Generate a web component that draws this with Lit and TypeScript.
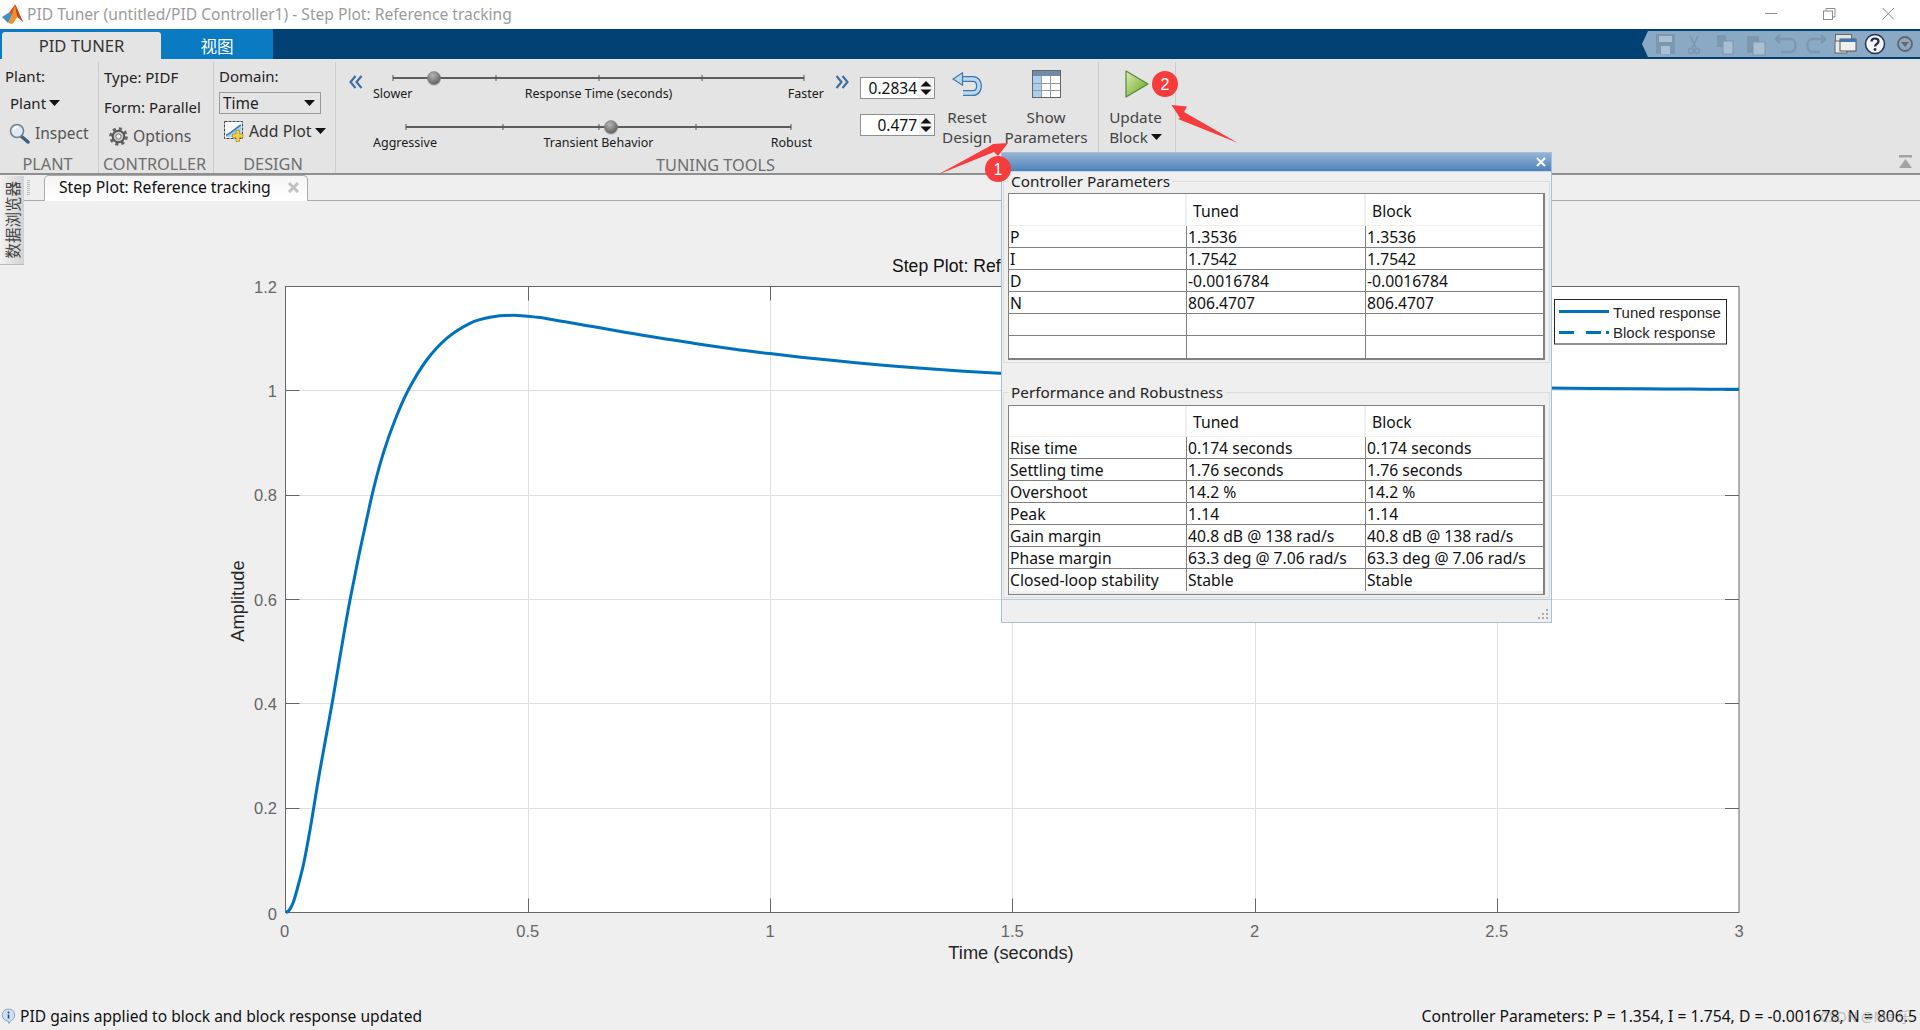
import { LitElement, html, css, svg } from "lit";
import { customElement } from "lit/decorators.js";

const X0 = 285.5, X1 = 1739, Y0 = 912.5, Y1 = 286.5;
const xOf = (t: number) => X0 + ((X1 - X0) * t) / 3;
const yOf = (v: number) => Y0 + ((Y1 - Y0) * v) / 1.2;

const RISE: [number, number][] = [
  [285.7, 912.5], [289, 910.5], [293, 903], [298.3, 885], [304, 862], [310, 830], [320, 770], [332, 704], [350, 600],
  [371.7, 496.7], [383.3, 453.3], [395, 420], [408.3, 390], [426.7, 360], [446.7, 338.3], [470, 323.3], [490, 317.3], [513.3, 315.3],
];
const TAIL: [number, number][] = [];
for (let t = 0.52; t <= 3.001; t += t < 1 ? 0.04 : 0.1) {
  const v = 1 + 0.36 * Math.exp(-t / 0.62) - 0.65 * Math.exp(-t / 0.137);
  TAIL.push([+xOf(t).toFixed(1), +yOf(v).toFixed(1)]);
}
const CURVE = [...RISE, ...TAIL];

function smooth(p: [number, number][]): string {
  let d = `M${p[0][0]} ${p[0][1]}`;
  for (let i = 0; i < p.length - 1; i++) {
    const a = p[Math.max(i - 1, 0)], b = p[i], c = p[i + 1], e = p[Math.min(i + 2, p.length - 1)];
    const c1x = b[0] + (c[0] - a[0]) / 6, c1y = b[1] + (c[1] - a[1]) / 6;
    const c2x = c[0] - (e[0] - b[0]) / 6, c2y = c[1] - (e[1] - b[1]) / 6;
    d += `C${c1x.toFixed(1)} ${c1y.toFixed(1)} ${c2x.toFixed(1)} ${c2y.toFixed(1)} ${c[0]} ${c[1]}`;
  }
  return d;
}

const XT = ["0", "0.5", "1", "1.5", "2", "2.5", "3"];
const YT = ["0", "0.2", "0.4", "0.6", "0.8", "1", "1.2"];

const PARAMS = [
  ["P", "1.3536", "1.3536"],
  ["I", "1.7542", "1.7542"],
  ["D", "-0.0016784", "-0.0016784"],
  ["N", "806.4707", "806.4707"],
  ["", "", ""],
  ["", "", ""],
];
const PERF = [
  ["Rise time", "0.174 seconds", "0.174 seconds"],
  ["Settling time", "1.76 seconds", "1.76 seconds"],
  ["Overshoot", "14.2 %", "14.2 %"],
  ["Peak", "1.14", "1.14"],
  ["Gain margin", "40.8 dB @ 138 rad/s", "40.8 dB @ 138 rad/s"],
  ["Phase margin", "63.3 deg @ 7.06 rad/s", "63.3 deg @ 7.06 rad/s"],
  ["Closed-loop stability", "Stable", "Stable"],
];

const caret = html`<svg class="caret" width="11" height="6" viewBox="0 0 11 6"><path d="M0 0H11L5.5 6Z" fill="#111"/></svg>`;

@customElement("app-root")
export class AppRoot extends LitElement {
  static styles = css`
    :host { display: block; width: 1920px; height: 1030px; position: relative; overflow: hidden;
      background: #efefef; font-family: "Noto Sans", "Noto Sans CJK SC", sans-serif; font-size: 15px; color: #222; }
    .app { display: flex; flex-direction: column; height: 1030px; }
    .title { height: 29px; background: #fff; display: flex; align-items: center; color: #9b9b9b; font-size: 15.6px; flex: none; padding-bottom: 1px; box-sizing: border-box; }
    .logo { margin: 0 3px 0 2px; }
    .spacer { flex: 1; }
    .wc { margin-right: 20px; }
    .strip { height: 30px; background: #004073; display: flex; flex: none; }
    .tabs { width: 273px; background: #0a7ac2; display: flex; padding: 3px 0 0 2px; box-sizing: border-box; }
    .tab1 { width: 159px; background: #e4e4e4; border-radius: 3px 3px 0 0; display: flex; align-items: center; justify-content: center; font-size: 16.6px; color: #333; padding-bottom: 1px; box-sizing: border-box; }
    .tab2 { flex: 1; display: flex; align-items: center; justify-content: center; color: #fff; font-size: 16.6px; }
    .qat { margin-top: 2px; }
    .ribbon { height: 116px; box-sizing: border-box; background: #e4e4e4; border-bottom: 2px solid #8f8f8f; display: flex; padding-top: 3px; flex: none; }
    .sec { height: 111px; box-sizing: border-box; border-right: 1px solid #cdcdcd; display: flex; flex-direction: column; flex: none; }
    .body { height: 92px; box-sizing: border-box; padding-left: 5px; }
    .cap { height: 20px; line-height: 22px; text-align: center; color: #6e6e6e; font-size: 16.3px; white-space: nowrap; padding-right: 3px; }
    .row { display: flex; align-items: center; white-space: nowrap; }
    .r30 { height: 28px; margin-bottom: 2px; } .r32 { height: 30px; margin-bottom: 2px; } .r24 { height: 22px; margin-bottom: 2px; padding-left: 5px; } .r26 { height: 26px; }
    .r28 { height: 26px; margin-top: 6px; color: #555; font-size: 15.5px; }
    .r28b { height: 28px; margin-top: 2px; padding-left: 5px; color: #555; font-size: 15.7px; }
    .r28c { height: 28px; margin-top: 3px; padding-left: 5px; color: #333; font-size: 15.8px; }
    .caret { margin-left: 3px; }
    .ic { margin-right: 5px; flex: none; }
    .s-plant { width: 99px; } .s-ctrl { width: 115px; } .s-design { width: 122px; } .s-tune { width: 763px; } .s-update { width: 77px; }
    .select { width: 102px; height: 22px; box-sizing: border-box; border: 1px solid #999; display: flex; align-items: center; justify-content: space-between; padding: 0 5px 0 3px; font-size: 15.5px; }
    .tunebody { display: flex; padding-left: 13px; }
    .chev { width: 14px; height: 16px; margin-top: 12px; flex: none; }
    .sliders { width: 451px; margin-left: 10px; padding-top: 6px; flex: none; }
    .sl { height: 33px; margin-bottom: 16px; }
    .sl svg { display: block; }
    .slabels { display: grid; grid-template-columns: 1fr auto 1fr; margin-top: -2px; height: 16px; line-height: 16px; font-size: 12.5px; color: #1a1a1a; white-space: nowrap; }
    .slabels .a { justify-self: start; }
    .slabels .c { justify-self: end; }
    .pad12 { padding-right: 12px; }
    .chevr { margin-left: 11px; }
    .spins { margin-left: 11px; padding-top: 15px; width: 75px; flex: none; }
    .spin { height: 22px; box-sizing: border-box; border: 1px solid #8e8e8e; background: #fff; display: flex; align-items: center; justify-content: flex-end; margin-bottom: 15px; font-size: 15.5px; padding-right: 1px; color: #111; }
    .spin svg { margin-left: 2px; }
    .big { display: flex; flex-direction: column; align-items: center; color: #444; line-height: 20px; flex: none; white-space: nowrap; font-size: 15.3px; }
    .bigicon { height: 44px; margin-bottom: 1px; display: flex; align-items: center; }
    .w64 { width: 64px; } .w94 { width: 94px; }
    .upd { padding: 0 3px 0 0; display: flex; justify-content: center; }
    .playicon { margin-left: 4px; }
    .rest { flex: 1; display: flex; justify-content: flex-end; align-items: flex-end; padding: 0 8px 5px 0; }
    .doc { height: 26px; flex: none; box-sizing: border-box; border-bottom: 1px solid #aaa; padding-left: 44px; display: flex; }
    .dtab { width: 264px; height: 26px; box-sizing: border-box; background: linear-gradient(#f4f4f4, #fff 85%); border: 1px solid #aaa; border-bottom: none; border-radius: 5px 5px 0 0; display: flex; align-items: center; justify-content: space-between; padding: 0 7px 3px 14px; color: #111; font-size: 15.7px; white-space: nowrap; }
    .plot { flex: 1; display: block; }
    .plot text { font-family: "Liberation Sans", Arial, sans-serif; }
    .tick { font-size: 16.5px; fill: #666; }
    .lab { font-size: 18.3px; fill: #262626; }
    .ttl { font-size: 17.6px; fill: #111; }
    .leg { font-size: 15px; fill: #262626; }
    .status { height: 30px; flex: none; display: flex; justify-content: space-between; align-items: center; padding: 2px 3px 0 1px; color: #111; font-size: 15.7px; white-space: nowrap; box-sizing: border-box; }
    .stl { display: flex; align-items: center; gap: 4px; font-size: 15.6px; }
    .side { position: absolute; left: 0; top: 176px; width: 24px; height: 89px; background: linear-gradient(90deg, #f2f2f2, #d2d2d2); border-bottom: 1px solid #bbb; display: flex; align-items: center; justify-content: center; writing-mode: vertical-rl; text-orientation: sideways; color: #444; font-size: 15.5px; box-sizing: border-box; }
    .side span { transform: rotate(180deg); white-space: nowrap; }
    .grip { position: absolute; left: 27px; top: 180px; }
    .popup { position: absolute; left: 1001px; top: 152px; width: 551px; height: 471px; box-sizing: border-box; background: #efefef; border: 1px solid #a9bfd8; display: flex; flex-direction: column; color: #111; }
    .ptitle { height: 18px; flex: none; background: linear-gradient(#96b4d4, #4c82bb); display: flex; justify-content: flex-end; align-items: center; padding-right: 5px; border-bottom: 1px solid #c9d6e4; box-sizing: content-box; }
    .pbody { padding: 0 1px; flex: none; }
    fieldset { margin: 0; border: 1px solid #dcdcdc; padding: 3px 3px 2px 4px; min-width: 0; }
    fieldset + fieldset { margin-top: 20px; padding-top: 4px; padding-bottom: 2px; }
    legend { margin-left: 1px; padding: 0 2px 0 2px; line-height: 18px; font-size: 15.3px; color: #222; }
    .wrap { border: 1px solid #808080; border-right-width: 2px; border-bottom-width: 2px; width: 537px; box-sizing: border-box; background: #fff; }
    .wrap2 { border-bottom-width: 1px; background: #efefef; padding-bottom: 3px; }
    table { border-collapse: separate; border-spacing: 0; table-layout: fixed; width: 100%; background: #fff; }
    td, th { height: 22px; box-sizing: border-box; padding: 1px 0 0 1px; font-weight: normal; text-align: left; border-bottom: 1px solid #808080; border-right: 1px solid #808080; white-space: nowrap; font-size: 15.7px; line-height: 19px; }
    td:last-child, th:last-child { border-right: none; }
    tr:last-child td { border-bottom: none; }
    th { height: 32px; padding: 3px 0 0 6px; border-bottom: 1px solid #efefef; border-right: 2px solid #efefef; }
    .wrap2 th { height: 31px; }
    .c0 { width: 178px; } .c1 { width: 179px; }
    .pfoot { margin-top: auto; height: 20px; flex: none; border-top: 1px solid #b9cbde; display: flex; justify-content: flex-end; align-items: flex-end; padding: 0 2px 2px 0; }
    .over { position: absolute; left: 0; top: 0; pointer-events: none; }
    .badge { font-family: "Liberation Sans", sans-serif; font-size: 16px; fill: #fff; text-anchor: middle; }
    .wm { position: absolute; left: 1820px; top: 1006px; color: rgba(150,150,150,.6); font-size: 14px; font-family: "Noto Sans", "Noto Sans CJK SC", sans-serif; }
  `;

  private knob(cx: number, id: string) {
    return svg`<circle cx=${cx} cy="11" r="7" fill="#999" opacity=".45"/><circle cx=${cx} cy="10" r="6.5" fill="url(#${id})" stroke="#777" stroke-width=".5"/>`;
  }

  private slider(x1: number, ticks: number[], knobX: number, id: string) {
    const x2 = ticks[ticks.length - 1];
    return html`<svg width="451" height="20" viewBox="0 0 451 20">
      <defs><radialGradient id=${id} cx=".4" cy=".3" r=".8"><stop offset="0" stop-color="#b5b5b5"/><stop offset="1" stop-color="#555"/></radialGradient></defs>
      <rect x=${x1} y="9" width=${x2 - x1} height="2" fill="#5c5c5c"/>
      ${[x1, ...ticks].map((t) => svg`<rect x=${t - 0.5} y="7" width="1" height="6" fill="#555"/>`)}
      ${this.knob(knobX, id)}
    </svg>`;
  }

  private table(rows: string[][], second = false) {
    return html`<div class="wrap ${second ? "wrap2" : ""}"><table>
      <colgroup><col class="c0"/><col class="c1"/><col/></colgroup>
      <tr><th></th><th>Tuned</th><th>Block</th></tr>
      ${rows.map((r) => html`<tr><td>${r[0]}</td><td>${r[1]}</td><td>${r[2]}</td></tr>`)}
    </table></div>`;
  }

  render() {
    return html`<div class="app">
      <div class="title">
        <svg class="logo" width="22" height="22" viewBox="0 0 22 22">
          <path d="M0 14L7 9.5L10 12.5L6 20Z" fill="#3f8fc6"/>
          <path d="M7 9.5L13 1.5L15 6L10 12.5Z" fill="#d9541e"/>
          <path d="M13 1.5C16 6 18 14 21.5 19C19 17.5 17 15 15.5 14C13.5 16 12 20 10 21L6 20L10 12.5Z" fill="#f0912a"/>
          <path d="M13 1.5C16 6 18 14 21.5 19C19 17.5 17 15 15.5 14L14 8Z" fill="#c8401a"/>
        </svg>
        PID Tuner (untitled/PID Controller1) - Step Plot: Reference tracking
        <span class="spacer"></span>
        <svg class="wc" width="140" height="29" viewBox="1760 0 140 29" fill="none" stroke="#8c8c8c">
          <path d="M1765 13.5H1777"/>
          <rect x="1823.5" y="11" width="9" height="8.5"/><path d="M1826 11V8.5H1835V17H1832.5"/>
          <path d="M1882.5 8L1894 19.5M1894 8L1882.5 19.5"/>
        </svg>
      </div>
      <div class="strip">
        <div class="tabs"><div class="tab1">PID TUNER</div><div class="tab2">视图</div></div>
        <span class="spacer"></span>
        <svg class="qat" width="278" height="26" viewBox="0 0 278 26">
          <path d="M6 0H278V26H6L0 13Z" fill="#8aa9c4"/>
          <g fill="#7d97af" stroke="#7d97af">
            <path d="M14 3H33V23H14Z" stroke="none"/>
            <rect x="17" y="5" width="13" height="6" fill="#a9bfd2" stroke="none"/>
            <rect x="19" y="15" width="9" height="8" fill="#a9bfd2" stroke="none"/>
            <g fill="none" stroke-width="1.5"><path d="M48 5L54 17M56 5L50 17"/><circle cx="49" cy="20" r="2.5"/><circle cx="55" cy="20" r="2.5"/>
            <path d="M134 8H149C155 8 155 21 149 21H139M138 4L134 8L138 12" stroke-width="2.5"/>
            <path d="M183 8H170C164 8 164 21 170 21H178M179 4L183 8L179 12" stroke-width="2.5"/></g>
            <rect x="75" y="4" width="9" height="12" stroke="none"/><rect x="81" y="10" width="10" height="13" fill="#a9bfd2"/>
            <rect x="105" y="5" width="12" height="17" stroke="none"/><rect x="111" y="11" width="12" height="13" fill="#a9bfd2"/>
          </g>
          <rect x="193.5" y="3.5" width="16" height="16" fill="#e4e4e4" stroke="#666"/>
          <rect x="193" y="10" width="12" height="12" fill="#e8e8e8" stroke="#666"/>
          <rect x="198" y="8" width="16" height="12" fill="#f0f0f0" stroke="#555"/><rect x="198" y="8" width="16" height="3" fill="#3d78b0"/>
          <circle cx="233" cy="13" r="9.5" fill="#f2f4f8" stroke="#28334f" stroke-width="1.5"/>
          <path d="M229.5 10.5C229.5 6.5 236.5 6.5 236.5 10.5C236.5 13 233 13 233 15.5" fill="none" stroke="#1f2c48" stroke-width="2.2"/><circle cx="233" cy="18.5" r="1.4" fill="#1f2c48"/>
          <circle cx="263" cy="13" r="7" fill="none" stroke="#666" stroke-width="1.8"/><path d="M259 11H267L263 16Z" fill="#666"/>
        </svg>
      </div>
      <div class="ribbon">
        <div class="sec s-plant"><div class="body">
          <div class="row r30">Plant:</div>
          <div class="row r24">Plant${caret}</div>
          <div class="row r28">
            <svg class="ic" style="margin-left:4px" width="21" height="21" viewBox="0 0 21 21"><path d="M12 13L19 19" stroke="#3e5f85" stroke-width="3.5" stroke-linecap="round"/><circle cx="8" cy="8" r="6.5" fill="#dbeaf6" stroke="#76808a" stroke-width="1.6"/><path d="M4 7C5 5 6.500 4 8.500 4" stroke="#fff" stroke-width="1.500" fill="none"/></svg>Inspect
          </div>
        </div><div class="cap">PLANT</div></div>
        <div class="sec s-ctrl"><div class="body">
          <div class="row r32">Type: PIDF</div>
          <div class="row r26">Form: Parallel</div>
          <div class="row r28b">
            <svg class="ic" width="19" height="19" viewBox="0 0 19 19"><circle cx="9.500" cy="9.500" r="7.800" fill="none" stroke="#666" stroke-width="3" stroke-dasharray="3.200 2.930"/><circle cx="9.500" cy="9.500" r="5.800" fill="#c9c9c9" stroke="#555" stroke-width="2"/><circle cx="9.500" cy="9.500" r="2.600" fill="#eee" stroke="#777"/></svg>Options
          </div>
        </div><div class="cap">CONTROLLER</div></div>
        <div class="sec s-design"><div class="body">
          <div class="row r30">Domain:</div>
          <div class="select"><span>Time</span>${caret}</div>
          <div class="row r28c">
            <svg class="ic" width="20" height="21" viewBox="0 0 20 21"><rect x=".5" y=".5" width="18" height="17" fill="#f6f8fb" stroke="#444" stroke-dasharray="3 1"/><path d="M2 14C7 13 10 8 17 4L18 16H2Z" fill="#a9cdee"/><path d="M2 14C7 13 10 8 17 4" stroke="#2f79bd" stroke-width="1.500" fill="none"/><path d="M13 9H16.500V12.500H20V16H16.500V20H13V16H9.500V12.500H13Z" transform="translate(-1 .5)" fill="#f2cf4b" stroke="#a88a24" stroke-width=".7"/></svg>Add Plot${caret}
          </div>
        </div><div class="cap">DESIGN</div></div>
        <div class="sec s-tune"><div class="body tunebody">
          <svg class="chev" viewBox="0 0 14 16" fill="none" stroke="#3f6fa3" stroke-width="2.200"><path d="M6.500 2L1.500 8L6.500 14M12.500 2L7.500 8L12.500 14"/></svg>
          <div class="sliders">
            <div class="sl">${this.slider(20, [123, 226, 329, 431], 61, "k1")}
              <div class="slabels"><span class="a">Slower</span><span>Response Time (seconds)</span><span class="c">Faster</span></div></div>
            <div class="sl">${this.slider(33, [130, 226, 323, 418], 238, "k2")}
              <div class="slabels"><span class="a">Aggressive</span><span>Transient Behavior</span><span class="c pad12">Robust</span></div></div>
          </div>
          <svg class="chev chevr" viewBox="0 0 14 16" fill="none" stroke="#3f6fa3" stroke-width="2.200"><path d="M1.500 2L6.500 8L1.500 14M7.500 2L12.500 8L7.500 14"/></svg>
          <div class="spins">
            ${["0.2834", "0.477"].map((v) => html`<div class="spin">${v}<svg width="14" height="20" viewBox="0 0 14 20"><rect width="14" height="20" fill="#f3f3f3"/><path d="M1.500 8.500H12.500L7 3Z M1.500 11.500H12.500L7 17Z" fill="#111"/></svg></div>`)}
          </div>
          <div class="big w64">
            <div class="bigicon"><svg width="30" height="25" viewBox="0 0 30 25">
              <path d="M6 7H21C29 7 29 21 21 21H11" fill="none" stroke="#3f78a8" stroke-width="6"/>
              <path d="M6 7H21C29 7 29 21 21 21H11" fill="none" stroke="#bcd8ee" stroke-width="3.500"/>
              <path d="M10.500 .8V13.200L1 7Z" fill="#bcd8ee" stroke="#3f78a8" stroke-width="1.200"/></svg></div>
            <span>Reset</span><span>Design</span>
          </div>
          <div class="big w94">
            <div class="bigicon"><svg width="29" height="28" viewBox="0 0 29 28">
              <rect x=".5" y=".5" width="28" height="27" fill="#fff" stroke="#666"/>
              <rect x="1" y="1" width="27" height="5" fill="#6f8ca8"/>
              <rect x="1" y="6" width="8" height="21" fill="#a8d0ee"/>
              <path d="M9.500 6V27M18.500 6V27M1 13.500H28M1 20.500H28" stroke="#999"/></svg></div>
            <span>Show</span><span>Parameters</span>
          </div>
        </div><div class="cap">TUNING TOOLS</div></div>
        <div class="sec s-update"><div class="body upd">
          <div class="big">
            <div class="bigicon"><svg class="playicon" width="24" height="28" viewBox="0 0 24 28">
              <defs><linearGradient id="pg" x1="0" y1="0" x2="1" y2="1"><stop offset="0" stop-color="#e0efb4"/><stop offset="1" stop-color="#5fa012"/></linearGradient></defs>
              <path d="M1 1L23 14L1 27Z" fill="url(#pg)" stroke="#4c8a3c" stroke-width="1.200" stroke-linejoin="round"/></svg></div>
            <span>Update</span><span class="row">Block${caret}</span>
          </div>
        </div></div>
        <div class="rest"><svg width="13" height="13" viewBox="0 0 13 13" fill="#a3a3a3"><rect width="13" height="2.500"/><path d="M6.500 4L13 13H0Z"/></svg></div>
      </div>
      <div class="doc"><div class="dtab"><span>Step Plot: Reference tracking</span>
        <svg width="13" height="13" viewBox="0 0 13 13"><path d="M2 2L11 11M11 2L2 11" stroke="#c2c2c2" stroke-width="3"/></svg></div></div>
      <svg class="plot" width="1920" height="799" viewBox="0 201 1920 799">
        <rect x=${X0} y=${Y1} width=${X1 - X0} height=${Y0 - Y1} fill="#fff"/>
        ${XT.slice(1, -1).map((_, i) => { const x = Math.round(xOf((i + 1) * 0.5)) + 0.5; return svg`<path d="M${x} ${Y1}V${Y0}" stroke="#dfdfdf"/>`; })}
        ${YT.slice(1, -1).map((_, i) => { const y = Math.floor(yOf((i + 1) * 0.2)) + 0.5; return svg`<path d="M${X0} ${y}H${X1}" stroke="#dfdfdf"/>`; })}
        ${XT.slice(1, -1).map((_, i) => { const x = Math.round(xOf((i + 1) * 0.5)) + 0.5; return svg`<path d="M${x} ${Y0}v-14M${x} ${Y1}v14" stroke="#666"/>`; })}
        ${YT.slice(1, -1).map((_, i) => { const y = Math.floor(yOf((i + 1) * 0.2)) + 0.5; return svg`<path d="M${X0} ${y}h14M${X1} ${y}h-14" stroke="#666"/>`; })}
        <rect x=${X0} y=${Y1} width=${X1 - X0} height=${Y0 - Y1} fill="none" stroke="#666"/>
        <path d=${smooth(CURVE)} fill="none" stroke="#0072bd" stroke-width="3"/>
        ${XT.map((l, i) => svg`<text class="tick" x=${xOf(i * 0.5) - (i === 0 ? 1 : 0)} y="937" text-anchor="middle">${l}</text>`)}
        ${YT.map((l, i) => svg`<text class="tick" x="277" y=${yOf(i * 0.2) + 6 + (i === 0 ? 1 : 0)} text-anchor="end">${l}</text>`)}
        <text class="ttl" x="892" y="272">Step Plot: Reference tracking</text>
        <text class="lab" x="1011" y="959" text-anchor="middle">Time (seconds)</text>
        <text class="lab" transform="translate(244 601) rotate(-90)" text-anchor="middle">Amplitude</text>
        <rect x="1554.500" y="299.500" width="172" height="44.500" fill="#fff" stroke="#262626"/>
        <path d="M1559 311.500H1609" stroke="#0072bd" stroke-width="3"/>
        <path d="M1559 332.500H1609" stroke="#0072bd" stroke-width="3" stroke-dasharray="15 12 15 5 3"/>
        <text class="leg" x="1613" y="318">Tuned response</text>
        <text class="leg" x="1613" y="338">Block response</text>
      </svg>
      <div class="status">
        <span class="stl"><svg width="15" height="16" viewBox="0 0 15 16"><path d="M7.500 1A6 6 0 0 1 9.500 12.700L8 15.500L7 13A6 6 0 0 1 7.500 1Z" fill="#cfe0f2" stroke="#8aa7c4"/><path d="M7.500 6.500V10.500" stroke="#23466e" stroke-width="1.500"/><circle cx="7.500" cy="4.500" r="1" fill="#23466e"/></svg>PID gains applied to block and block response updated</span>
        <span>Controller Parameters: P = 1.354, I = 1.754, D = -0.001678, N = 806.5</span>
      </div>
    </div>
    <div class="side"><span>数据浏览器</span></div>
    <svg class="grip" width="3" height="15" viewBox="0 0 3 15"><path d="M0 .5H3M0 2.500H3M0 4.500H3M0 6.500H3M0 8.500H3M0 10.500H3M0 12.500H3M0 14.500H3" stroke="#bbb"/></svg>
    <div class="popup">
      <div class="ptitle"><svg width="10" height="10" viewBox="0 0 10 10"><path d="M1 1L9 9M9 1L1 9" stroke="#fff" stroke-width="2"/></svg></div>
      <div class="pbody">
        <fieldset><legend>Controller Parameters</legend>${this.table(PARAMS)}</fieldset>
        <fieldset><legend>Performance and Robustness</legend>${this.table(PERF, true)}</fieldset>
      </div>
      <div class="pfoot"><svg width="11" height="11" viewBox="0 0 11 11" fill="#aaa"><rect x="8" y="0" width="2" height="2"/><rect x="4" y="4" width="2" height="2"/><rect x="8" y="4" width="2" height="2"/><rect x="0" y="8" width="2" height="2"/><rect x="4" y="8" width="2" height="2"/><rect x="8" y="8" width="2" height="2"/></svg></div>
    </div>
    <svg class="over" width="1920" height="1030" viewBox="0 0 1920 1030">
      <path d="M937 175L990 146L993 144L1008 143L998 156L994 152Z" fill="#f63c3c"/>
      <circle cx="998" cy="169" r="13" fill="#f63c3c"/>
      <text class="badge" x="998" y="175">1</text>
      <path d="M1171.500 105L1187 106.500L1184 112L1238 143L1178 119L1180 118Z" fill="#f63c3c"/>
      <circle cx="1165" cy="84" r="13" fill="#f63c3c"/>
      <text class="badge" x="1165" y="90">2</text>
    </svg>
    <div class="wm">CSDN @Ma 乐</div>`;
  }
}
